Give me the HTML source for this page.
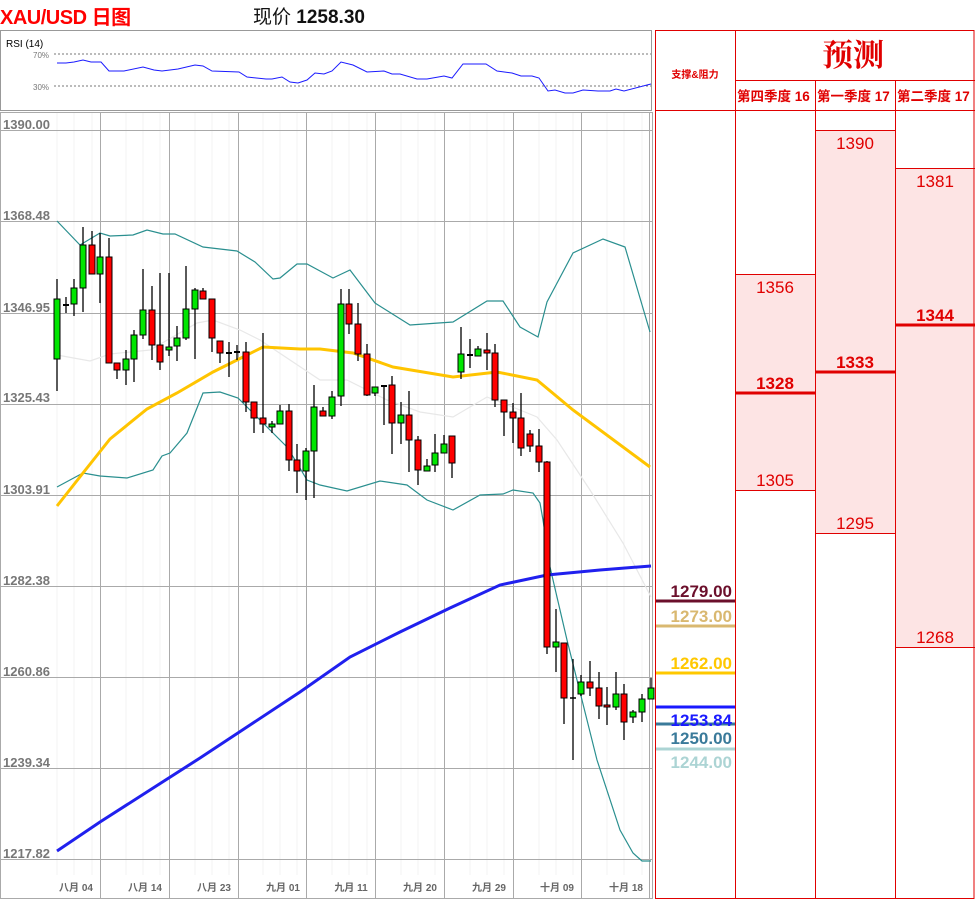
<!DOCTYPE html>
<html><head><meta charset="utf-8"><style>
body{margin:0;width:975px;height:900px;background:#fff;overflow:hidden;position:relative;font-family:"Liberation Sans","Noto Sans CJK SC",sans-serif}
.a{position:absolute;white-space:nowrap}
</style></head><body>
<div class="a" style="left:0;top:1px;font-size:20px;font-weight:bold;color:#f00;letter-spacing:-0.5px">XAU/USD 日图</div>
<div class="a" style="left:253px;top:2px;font-size:19px;color:#111">现价 <b>1258.30</b></div>

<svg class="a" style="left:0;top:0" width="975" height="900" xmlns="http://www.w3.org/2000/svg">
<!-- RSI panel -->
<rect x="0.5" y="30.5" width="651" height="80" fill="#fff" stroke="#999"/>
<text x="6" y="47" font-size="10" font-family="Liberation Sans" fill="#000">RSI (14)</text>
<text x="33" y="58" font-size="8" font-family="Liberation Sans" fill="#777">70%</text>
<text x="33" y="90" font-size="8" font-family="Liberation Sans" fill="#777">30%</text>
<line x1="54" y1="54" x2="651" y2="54" stroke="#777" stroke-dasharray="2,2"/>
<line x1="54" y1="86" x2="651" y2="86" stroke="#777" stroke-dasharray="2,2"/>
<polyline fill="none" stroke="#1a1aff" stroke-width="1" points="57,63 66,63 74,62 83,60 91,62 101,62 109,71 124,71 143,67 154,70 162,71 178,69 195,65 203,66 212,71 239,72 247,77 266,79 272,79 282,77 290,82 298,83 307,80 315,73 324,74 332,71 341,62 353,65 367,72 384,71 392,74 400,74 417,79 427,79 444,76 452,78 463,64 486,64 497,71 512,73 521,76 532,76 539,78 548,91 555,90 565,93 573,93 583,90 598,91 610,91 616,89 624,91 647,85 651,84"/>

<!-- chart frame -->
<rect x="0.5" y="112.5" width="652" height="786" fill="#fff" stroke="#aaa"/>
<g stroke="#f3f3f3" stroke-width="1">
<line x1="57" y1="113" x2="57" y2="875"/><line x1="74" y1="113" x2="74" y2="875"/><line x1="92" y1="113" x2="92" y2="875"/><line x1="126" y1="113" x2="126" y2="875"/><line x1="143" y1="113" x2="143" y2="875"/><line x1="160" y1="113" x2="160" y2="875"/><line x1="195" y1="113" x2="195" y2="875"/><line x1="212" y1="113" x2="212" y2="875"/><line x1="229" y1="113" x2="229" y2="875"/><line x1="263" y1="113" x2="263" y2="875"/><line x1="280" y1="113" x2="280" y2="875"/><line x1="297" y1="113" x2="297" y2="875"/><line x1="332" y1="113" x2="332" y2="875"/><line x1="349" y1="113" x2="349" y2="875"/><line x1="367" y1="113" x2="367" y2="875"/><line x1="401" y1="113" x2="401" y2="875"/><line x1="418" y1="113" x2="418" y2="875"/><line x1="435" y1="113" x2="435" y2="875"/><line x1="470" y1="113" x2="470" y2="875"/><line x1="487" y1="113" x2="487" y2="875"/><line x1="504" y1="113" x2="504" y2="875"/><line x1="539" y1="113" x2="539" y2="875"/><line x1="556" y1="113" x2="556" y2="875"/><line x1="573" y1="113" x2="573" y2="875"/><line x1="607" y1="113" x2="607" y2="875"/><line x1="624" y1="113" x2="624" y2="875"/><line x1="642" y1="113" x2="642" y2="875"/>
</g>
<g stroke="#aaa" stroke-width="1">
<line x1="0" y1="130.5" x2="652" y2="130.5"/><line x1="0" y1="221.5" x2="652" y2="221.5"/><line x1="0" y1="313.5" x2="652" y2="313.5"/><line x1="0" y1="404.5" x2="652" y2="404.5"/><line x1="0" y1="495.5" x2="652" y2="495.5"/><line x1="0" y1="586.5" x2="652" y2="586.5"/><line x1="0" y1="677.5" x2="652" y2="677.5"/><line x1="0" y1="768.5" x2="652" y2="768.5"/><line x1="0" y1="859.5" x2="652" y2="859.5"/>
<line x1="100.5" y1="113" x2="100.5" y2="898"/><line x1="169.5" y1="113" x2="169.5" y2="898"/><line x1="238.5" y1="113" x2="238.5" y2="898"/><line x1="306.5" y1="113" x2="306.5" y2="898"/><line x1="375.5" y1="113" x2="375.5" y2="898"/><line x1="444.5" y1="113" x2="444.5" y2="898"/><line x1="513.5" y1="113" x2="513.5" y2="898"/><line x1="581.5" y1="113" x2="581.5" y2="898"/><line x1="649.5" y1="113" x2="649.5" y2="898"/>
</g>
<g font-family="Liberation Sans" font-size="13" font-weight="bold" fill="#777">
<text x="3" y="129">1390.00</text><text x="3" y="220">1368.48</text><text x="3" y="312">1346.95</text><text x="3" y="402">1325.43</text><text x="3" y="494">1303.91</text><text x="3" y="585">1282.38</text><text x="3" y="676">1260.86</text><text x="3" y="767">1239.34</text><text x="3" y="858">1217.82</text>
</g>
<g font-family="Liberation Sans,Noto Sans CJK SC,sans-serif" font-size="10" font-weight="bold" fill="#666" text-anchor="middle">
<text x="76" y="891">八月 04</text><text x="145" y="891">八月 14</text><text x="214" y="891">八月 23</text><text x="283" y="891">九月 01</text><text x="351" y="891">九月 11</text><text x="420" y="891">九月 20</text><text x="489" y="891">九月 29</text><text x="557" y="891">十月 09</text><text x="626" y="891">十月 18</text>
</g>

<!-- bands -->
<polyline fill="none" stroke="#e8e8e8" stroke-width="1.2" points="57,355 90,361 110,354 150,350 197,323 213,320 240,330 260,340 290,360 320,380 347,380 387,400 420,412 453,417 487,397 520,410 537,417 557,440 590,490 623,543 651,597"/>
<polyline fill="none" stroke="#2a8f8f" stroke-width="1.2" points="57,221 80,245 100,233 110,236 133,235 147,230 163,234 175,234 203,247 237,251 255,262 273,279 280,278 297,264 307,264 333,278 350,270 375,303 410,325 453,322 487,301 503,301 520,327 538,337 547,302 573,253 603,239 625,247 650,332"/>
<polyline fill="none" stroke="#2a8f8f" stroke-width="1.2" points="57,487 83,473 100,476 127,478 153,470 162,456 170,453 187,433 203,393 220,392 238,398 253,413 267,427 287,447 297,463 307,480 320,485 347,491 380,481 407,485 427,500 453,510 480,495 503,494 513,490 533,493 540,503 543,520 550,567 567,640 597,760 620,830 633,853 642,861 651,861"/>
<polyline fill="none" stroke="#ffc400" stroke-width="3" points="57,506 83,473 110,439 147,409 177,393 213,372 243,357 263,347 300,349 320,349 353,353 393,367 453,377 497,372 537,380 573,410 650,467"/>
<polyline fill="none" stroke="#2020ee" stroke-width="3" points="57,851 100,822 150,790 200,758 250,725 300,692 350,657 400,632 450,608 500,585 547,575 600,570 651,566"/>

<!-- candles -->
<g stroke="#000" stroke-width="1.3">
<line x1="57" y1="279" x2="57" y2="391"/><line x1="66" y1="297" x2="66" y2="313"/><line x1="74" y1="279" x2="74" y2="316"/><line x1="83" y1="227" x2="83" y2="312"/><line x1="92" y1="231" x2="92" y2="274"/><line x1="100" y1="233" x2="100" y2="303"/><line x1="109" y1="238" x2="109" y2="363"/><line x1="117" y1="363" x2="117" y2="379"/><line x1="126" y1="350" x2="126" y2="385"/><line x1="134" y1="330" x2="134" y2="382"/><line x1="143" y1="269" x2="143" y2="339"/><line x1="152" y1="286" x2="152" y2="360"/><line x1="160" y1="273" x2="160" y2="370"/><line x1="169" y1="273" x2="169" y2="356"/><line x1="177" y1="326" x2="177" y2="361"/><line x1="186" y1="266" x2="186" y2="340"/><line x1="195" y1="288" x2="195" y2="359"/><line x1="203" y1="288" x2="203" y2="299"/><line x1="212" y1="299" x2="212" y2="352"/><line x1="220" y1="341" x2="220" y2="363"/><line x1="229" y1="342" x2="229" y2="377"/><line x1="237" y1="345" x2="237" y2="360"/><line x1="246" y1="342" x2="246" y2="412"/><line x1="254" y1="402" x2="254" y2="433"/><line x1="263" y1="333" x2="263" y2="433"/><line x1="272" y1="421" x2="272" y2="433"/><line x1="280" y1="405" x2="280" y2="424"/><line x1="289" y1="404" x2="289" y2="471"/><line x1="297" y1="444" x2="297" y2="493"/><line x1="306" y1="448" x2="306" y2="500"/><line x1="314" y1="385" x2="314" y2="498"/><line x1="323" y1="407" x2="323" y2="416"/><line x1="332" y1="391" x2="332" y2="419"/><line x1="341" y1="289" x2="341" y2="406"/><line x1="349" y1="289" x2="349" y2="334"/><line x1="358" y1="303" x2="358" y2="361"/><line x1="367" y1="344" x2="367" y2="396"/><line x1="375" y1="387" x2="375" y2="396"/><line x1="384" y1="386" x2="384" y2="425"/><line x1="392" y1="376" x2="392" y2="454"/><line x1="401" y1="402" x2="401" y2="444"/><line x1="409" y1="391" x2="409" y2="472"/><line x1="418" y1="436" x2="418" y2="485"/><line x1="427" y1="459" x2="427" y2="471"/><line x1="435" y1="434" x2="435" y2="472"/><line x1="444" y1="435" x2="444" y2="453"/><line x1="452" y1="436" x2="452" y2="478"/><line x1="461" y1="327" x2="461" y2="379"/><line x1="470" y1="339" x2="470" y2="368"/><line x1="478" y1="346" x2="478" y2="356"/><line x1="487" y1="333" x2="487" y2="370"/><line x1="495" y1="344" x2="495" y2="407"/><line x1="504" y1="400" x2="504" y2="436"/><line x1="513" y1="403" x2="513" y2="443"/><line x1="521" y1="393" x2="521" y2="456"/><line x1="530" y1="430" x2="530" y2="452"/><line x1="539" y1="429" x2="539" y2="472"/><line x1="547" y1="461" x2="547" y2="654"/><line x1="556" y1="609" x2="556" y2="672"/><line x1="564" y1="643" x2="564" y2="724"/><line x1="573" y1="659" x2="573" y2="760"/><line x1="581" y1="675" x2="581" y2="696"/><line x1="590" y1="661" x2="590" y2="696"/><line x1="599" y1="672" x2="599" y2="719"/><line x1="607" y1="687" x2="607" y2="725"/><line x1="616" y1="672" x2="616" y2="710"/><line x1="624" y1="684" x2="624" y2="740"/><line x1="633" y1="710" x2="633" y2="723"/><line x1="642" y1="694" x2="642" y2="722"/><line x1="651" y1="678" x2="651" y2="699"/>
<line x1="63" y1="305" x2="69" y2="305" stroke-width="2"/><line x1="226" y1="353" x2="232" y2="353" stroke-width="2"/><line x1="234" y1="352" x2="240" y2="352" stroke-width="2"/><line x1="381" y1="386" x2="387" y2="386" stroke-width="2"/><line x1="467" y1="355" x2="473" y2="355" stroke-width="2"/><line x1="570" y1="698" x2="576" y2="698" stroke-width="1.5"/>
</g>
<g stroke="#000" stroke-width="1">
<g fill="#00e600">
<rect x="54" y="299" width="6" height="60"/><rect x="71" y="288" width="6" height="16"/><rect x="80" y="245" width="6" height="43"/><rect x="97" y="257" width="6" height="17"/><rect x="123" y="359" width="6" height="11"/><rect x="131" y="335" width="6" height="24"/><rect x="140" y="310" width="6" height="25"/><rect x="166" y="347" width="6" height="3"/><rect x="174" y="338" width="6" height="8"/><rect x="183" y="309" width="6" height="29"/><rect x="192" y="290" width="6" height="19"/><rect x="269" y="424" width="6" height="3"/><rect x="277" y="411" width="6" height="13"/><rect x="303" y="451" width="6" height="20"/><rect x="311" y="407" width="6" height="44"/><rect x="329" y="397" width="6" height="19"/><rect x="338" y="304" width="6" height="92"/><rect x="372" y="387" width="6" height="6"/><rect x="398" y="415" width="6" height="8"/><rect x="424" y="466" width="6" height="5"/><rect x="432" y="453" width="6" height="12"/><rect x="441" y="444" width="6" height="9"/><rect x="458" y="354" width="6" height="18"/><rect x="475" y="349" width="6" height="7"/><rect x="553" y="642" width="6" height="5"/><rect x="578" y="682" width="6" height="12"/><rect x="613" y="694" width="6" height="13"/><rect x="630" y="712" width="6" height="5"/><rect x="639" y="699" width="6" height="13"/><rect x="648" y="688" width="6" height="11"/>
</g>
<g fill="#ff0000">
<rect x="89" y="245" width="6" height="29"/><rect x="106" y="257" width="6" height="106"/><rect x="114" y="363" width="6" height="7"/><rect x="149" y="310" width="6" height="35"/><rect x="157" y="345" width="6" height="17"/><rect x="200" y="291" width="6" height="8"/><rect x="209" y="299" width="6" height="39"/><rect x="217" y="341" width="6" height="12"/><rect x="243" y="352" width="6" height="50"/><rect x="251" y="402" width="6" height="16"/><rect x="260" y="418" width="6" height="6"/><rect x="286" y="411" width="6" height="49"/><rect x="294" y="460" width="6" height="11"/><rect x="320" y="411" width="6" height="5"/><rect x="346" y="304" width="6" height="20"/><rect x="355" y="324" width="6" height="30"/><rect x="364" y="354" width="6" height="41"/><rect x="389" y="385" width="6" height="38"/><rect x="406" y="415" width="6" height="25"/><rect x="415" y="440" width="6" height="30"/><rect x="449" y="436" width="6" height="27"/><rect x="484" y="350" width="6" height="3"/><rect x="492" y="353" width="6" height="47"/><rect x="501" y="400" width="6" height="12"/><rect x="510" y="412" width="6" height="6"/><rect x="518" y="418" width="6" height="30"/><rect x="527" y="434" width="6" height="12"/><rect x="536" y="446" width="6" height="16"/><rect x="544" y="462" width="6" height="185"/><rect x="561" y="643" width="6" height="55"/><rect x="587" y="682" width="6" height="6"/><rect x="596" y="688" width="6" height="18"/><rect x="604" y="705" width="6" height="2"/><rect x="621" y="694" width="6" height="28"/>
</g>
</g>

<!-- table -->
<rect x="815" y="130" width="80" height="403" fill="#fde4e4"/>
<rect x="735" y="274" width="80" height="216" fill="#fde4e4"/>
<rect x="895" y="168" width="79" height="479" fill="#fde4e4"/>
<g stroke="#e00000" stroke-width="1" fill="none">
<rect x="655.5" y="30.5" width="318.5" height="868"/>
<line x1="735.5" y1="30" x2="735.5" y2="899"/><line x1="815.5" y1="80" x2="815.5" y2="899"/><line x1="895.5" y1="80" x2="895.5" y2="899"/>
<line x1="735" y1="80.5" x2="975" y2="80.5"/><line x1="655" y1="110.5" x2="975" y2="110.5"/>
<line x1="815" y1="130.5" x2="895" y2="130.5"/><line x1="815" y1="533.5" x2="895" y2="533.5"/>
<line x1="735" y1="274.5" x2="815" y2="274.5"/><line x1="735" y1="490.5" x2="815" y2="490.5"/>
<line x1="895" y1="168.5" x2="975" y2="168.5"/><line x1="895" y1="647.5" x2="975" y2="647.5"/>
</g>
<g stroke="#e00000" stroke-width="3">
<line x1="735" y1="393" x2="815" y2="393"/><line x1="815" y1="372" x2="895" y2="372"/><line x1="895" y1="325" x2="975" y2="325"/>
</g>
<text x="695" y="78" font-size="10" font-weight="bold" fill="#e00000" text-anchor="middle" font-family="Liberation Sans,Noto Sans CJK SC,sans-serif">支撑&amp;阻力</text>
<text x="853" y="66" font-size="31" fill="#e00000" text-anchor="middle" font-family="Noto Serif CJK SC,serif" font-weight="bold">预测</text>
<g font-size="13.5" font-weight="bold" fill="#e00000" font-family="Liberation Sans,Noto Sans CJK SC,sans-serif">
<text x="737" y="101">第四季度 16</text><text x="817" y="101">第一季度 17</text><text x="897" y="101">第二季度 17</text>
</g>
<g font-size="17" fill="#e00000" text-anchor="middle" font-family="Liberation Sans,sans-serif">
<text x="855" y="149">1390</text><text x="935" y="187">1381</text><text x="775" y="293">1356</text><text x="775" y="486">1305</text><text x="855" y="529">1295</text><text x="935" y="643">1268</text>
<text x="775" y="389" font-weight="bold">1328</text><text x="855" y="368" font-weight="bold">1333</text><text x="935" y="321" font-weight="bold">1344</text>
</g>
<g stroke-width="3">
<line x1="656" y1="601" x2="735" y2="601" stroke="#6b0f2b"/>
<line x1="656" y1="626" x2="735" y2="626" stroke="#d9b870"/>
<line x1="656" y1="673" x2="735" y2="673" stroke="#ffc800"/>
<line x1="656" y1="707" x2="735" y2="707" stroke="#1a1aff"/>
<line x1="656" y1="724" x2="735" y2="724" stroke="#3a7a9a"/>
<line x1="656" y1="749" x2="735" y2="749" stroke="#acd4d4"/>
</g>
<g font-size="17" font-weight="bold" text-anchor="end" font-family="Liberation Sans,sans-serif">
<text x="732" y="597" fill="#6b0f2b">1279.00</text>
<text x="732" y="622" fill="#d9b870">1273.00</text>
<text x="732" y="669" fill="#ffc800">1262.00</text>
<text x="732" y="726" fill="#1a1aff">1253.84</text>
<text x="732" y="744" fill="#3a7a9a">1250.00</text>
<text x="732" y="768" fill="#acd4d4">1244.00</text>
</g>
</svg>
</body></html>
